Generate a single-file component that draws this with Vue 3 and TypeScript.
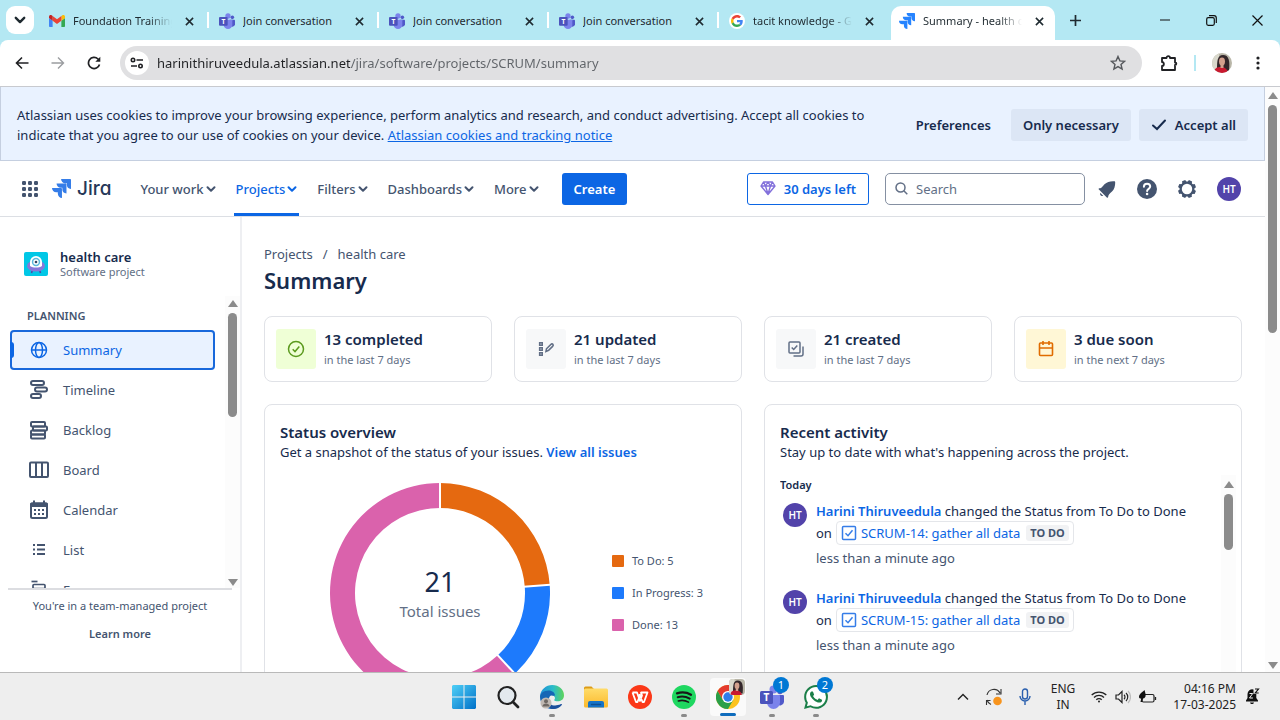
<script setup lang="ts">
import { ref } from 'vue'

interface Tab { title: string; icon: string; active?: boolean }
interface Stat { icon: string; tone: string; title: string; note: string }
interface Slice { label: string; value: number; color: string }

const tabs: Tab[] = [
  { title: 'Foundation Training', icon: 'gmail' },
  { title: 'Join conversation', icon: 'teams' },
  { title: 'Join conversation', icon: 'teams' },
  { title: 'Join conversation', icon: 'teams' },
  { title: 'tacit knowledge - Google', icon: 'google' },
  { title: 'Summary - health care', icon: 'jira', active: true },
]

const menu = [
  { label: 'Your work' },
  { label: 'Projects', active: true },
  { label: 'Filters' },
  { label: 'Dashboards' },
  { label: 'More' },
]

const planning = ['Summary', 'Timeline', 'Backlog', 'Board', 'Calendar', 'List', 'Forms']

const stats: Stat[] = [
  { icon: 'done', tone: 'green', title: '13 completed', note: 'in the last 7 days' },
  { icon: 'edited', tone: 'grey', title: '21 updated', note: 'in the last 7 days' },
  { icon: 'created', tone: 'grey', title: '21 created', note: 'in the last 7 days' },
  { icon: 'due', tone: 'yellow', title: '3 due soon', note: 'in the next 7 days' },
]

const slices: Slice[] = [
  { label: 'To Do', value: 5, color: '#e56910' },
  { label: 'In Progress', value: 3, color: '#1d7afc' },
  { label: 'Done', value: 13, color: '#da62ac' },
]
const total = slices.reduce((sum, s) => sum + s.value, 0)

function point(share: number, radius: number): string {
  const angle = share * 2 * Math.PI
  return `${110 + radius * Math.sin(angle)} ${110 - radius * Math.cos(angle)}`
}

let passed = 0
const arcs = slices.map((s) => {
  const from = passed / total
  passed += s.value
  const to = passed / total
  const large = to - from > 0.5 ? 1 : 0
  return {
    color: s.color,
    d: `M${point(from, 110)} A110 110 0 ${large} 1 ${point(to, 110)} L${point(to, 85)} A85 85 0 ${large} 0 ${point(from, 85)} Z`,
    edge: `M${point(from, 84)} L${point(from, 111)}`,
  }
})

const activity = ['SCRUM-14: gather all data', 'SCRUM-15: gather all data', 'SCRUM-16: gather all data']

const apps = [
  { name: 'Start', icon: 'windows' },
  { name: 'Search', icon: 'find' },
  { name: 'Edge', icon: 'edge', running: true },
  { name: 'File Explorer', icon: 'folder' },
  { name: 'WPS Office', icon: 'wps' },
  { name: 'Spotify', icon: 'spotify', running: true },
  { name: 'Chrome', icon: 'chrome', active: true },
  { name: 'Teams', icon: 'teams', running: true, badge: 1 },
  { name: 'WhatsApp', icon: 'whatsapp', running: true, badge: 2 },
]

const address = ref('harinithiruveedula.atlassian.net/jira/software/projects/SCRUM/summary')
const query = ref('')
</script>

<template>
  <div class="screen">
    <svg class="sprite" aria-hidden="true">
      <defs>
        <linearGradient id="winGrad" x1="0" y1="0" x2="1" y2="1"><stop offset="0" stop-color="#4fd0f7" /><stop offset="1" stop-color="#0070c8" /></linearGradient>
        <linearGradient id="edgeGrad" x1="0" y1="0" x2="1" y2="0"><stop offset="0" stop-color="#1d8fd8" /><stop offset=".55" stop-color="#2bbcc8" /><stop offset="1" stop-color="#5fd45a" /></linearGradient>
        <linearGradient id="folderGrad" x1="0" y1="0" x2="0" y2="1"><stop offset="0" stop-color="#ffdc6a" /><stop offset="1" stop-color="#fbb92c" /></linearGradient>
        <symbol id="i-gmail" viewBox="52 42 88 66">
          <path fill="#4285f4" d="M58 108h14V74L52 59v43c0 3.32 2.69 6 6 6" />
          <path fill="#34a853" d="M120 108h14c3.32 0 6-2.69 6-6V59l-20 15" />
          <path fill="#fbbc04" d="M120 48v26l20-15v-8c0-7.42-8.47-11.65-14.4-7.2" />
          <path fill="#ea4335" d="M72 74V48l24 18 24-18v26L96 92" />
          <path fill="#c5221f" d="M52 51v8l20 15V48l-5.600-4.200c-5.940-4.450-14.400-.22-14.400 7.200" />
        </symbol>
        <symbol id="i-teams" viewBox="0 0 24 24">
          <circle cx="20" cy="6.500" r="2.700" fill="#5059c9" /><path fill="#5059c9" d="M16 10h7a1 1 0 0 1 1 1v6a4 4 0 0 1-7 2z" />
          <circle cx="13.500" cy="4.500" r="4" fill="#7b83eb" /><path fill="#7b83eb" d="M8 10h11a1 1 0 0 1 1 1v6.500a6.500 6.500 0 0 1-13 0z" />
          <rect x="0" y="6" width="13" height="13" rx="1.500" fill="#4b53bc" />
          <text x="6.500" y="16" text-anchor="middle" font-size="10" font-weight="700" fill="#fff">T</text>
        </symbol>
        <symbol id="i-google" viewBox="-8 -8 64 64">
          <circle cx="24" cy="24" r="32" fill="#fff" />
          <path fill="#EA4335" d="M24 9.500c3.540 0 6.710 1.220 9.210 3.600l6.850-6.850C35.900 2.380 30.470 0 24 0 14.620 0 6.510 5.380 2.560 13.220l7.980 6.190C12.430 13.720 17.740 9.500 24 9.500z" />
          <path fill="#4285F4" d="M46.980 24.550c0-1.570-.15-3.090-.38-4.550H24v9.020h12.940c-.58 2.960-2.260 5.480-4.780 7.180l7.730 6c4.510-4.180 7.090-10.360 7.090-17.650z" />
          <path fill="#FBBC05" d="M10.530 28.590A14.500 14.500 0 0 1 9.770 24c0-1.600.27-3.140.76-4.590l-7.980-6.190A23.900 23.900 0 0 0 0 24c0 3.880.92 7.540 2.560 10.780l7.970-6.190z" />
          <path fill="#34A853" d="M24 48c6.480 0 11.930-2.130 15.890-5.810l-7.730-6c-2.150 1.450-4.920 2.300-8.160 2.300-6.260 0-11.570-4.220-13.470-9.910l-7.980 6.190C6.510 42.620 14.620 48 24 48z" />
        </symbol>
        <symbol id="i-jira" viewBox="0 0 24 24">
          <path d="M11.571 11.513H0a5.218 5.218 0 0 0 5.232 5.215h2.130v2.057A5.215 5.215 0 0 0 12.575 24V12.518a1.005 1.005 0 0 0-1.005-1.005zm5.723-5.756H5.736a5.215 5.215 0 0 0 5.215 5.214h2.129v2.058a5.218 5.218 0 0 0 5.215 5.214V6.758a1.001 1.001 0 0 0-1.001-1.001zM23.013 0H11.455a5.215 5.215 0 0 0 5.215 5.215h2.129v2.057A5.215 5.215 0 0 0 24 12.483V1.005A1.001 1.001 0 0 0 23.013 0Z" />
        </symbol>
        <symbol id="i-person" viewBox="0 0 20 20">
          <rect width="20" height="20" fill="#b9b6a8" /><path fill="#d9d8cc" d="M0 0h7v20H0z" />
          <path fill="#33262a" d="M5 17C5 9 5 2 11 2s7 6 6 16z" /><path fill="#c9192f" d="M2 20c0-5 3-6 7-6s7 3 7 6z" />
          <ellipse cx="10" cy="8.500" rx="3" ry="4" fill="#d3a08d" /><path fill="#d3a08d" d="M8.500 11h3v4h-3z" />
        </symbol>
        <symbol id="i-close" viewBox="0 0 10 10"><path d="M1 1l8 8M9 1L1 9" fill="none" stroke="currentColor" stroke-width="1.700" /></symbol>
        <symbol id="i-chevron" viewBox="0 0 10 10"><path d="M1.500 3.200L5 6.700l3.500-3.500" fill="none" stroke="currentColor" stroke-width="2" stroke-linecap="round" stroke-linejoin="round" /></symbol>

        <symbol id="i-Summary" viewBox="0 0 20 20"><g fill="none" stroke="currentColor" stroke-width="1.500"><circle cx="10" cy="10" r="7.500" /><ellipse cx="10" cy="10" rx="3.500" ry="7.500" /><path d="M2.500 10h15" /></g></symbol>
        <symbol id="i-Timeline" viewBox="0 0 20 20"><g fill="none" stroke="currentColor" stroke-width="2"><rect x="2" y="1" width="13" height="4" rx="2" /><rect x="6" y="7.500" width="12" height="4" rx="2" /><rect x="2" y="14" width="10" height="4" rx="2" /></g></symbol>
        <symbol id="i-Backlog" viewBox="0 0 20 20"><g fill="none" stroke="currentColor" stroke-width="2"><rect x="2" y="2" width="14" height="4.500" rx="1" /><rect x="4" y="6.500" width="14" height="4" rx="1" /><rect x="2" y="10.500" width="14" height="4" rx="1" /><rect x="2" y="14.500" width="14" height="4" rx="1" /></g></symbol>
        <symbol id="i-Board" viewBox="0 0 20 20"><g fill="none" stroke="currentColor" stroke-width="2"><rect x="1" y="2.500" width="18" height="14.500" rx="1" /><path d="M7 2.500v14.500M13 2.500v14.500" /></g></symbol>
        <symbol id="i-Calendar" viewBox="0 0 20 20"><rect x="2" y="3.500" width="16" height="14.500" rx="1.500" fill="none" stroke="currentColor" stroke-width="2" /><path fill="currentColor" d="M1 7V4a1.500 1.500 0 0 1 1.500-1.500H4V.5h2v2h8v-2h2v2h1.500A1.500 1.500 0 0 1 19 4v3zM5 9h2v2H5zM9 9h2v2H9zM13 9h2v2h-2zM5 13h2v2H5zM9 13h2v2H9zM13 13h2v2h-2z" /></symbol>
        <symbol id="i-List" viewBox="0 0 20 20"><path fill="none" stroke="currentColor" stroke-width="1.800" d="M4 5h2M4 9.500h2M4 14h2M8 5h8M8 9.500h8M8 14h8" /></symbol>
        <symbol id="i-Forms" viewBox="0 0 20 20"><g fill="none" stroke="currentColor" stroke-width="1.700"><path d="M2.500 1.500h6" /><rect x="4" y="4.500" width="12" height="4" rx="1" /><rect x="2.500" y="12" width="12" height="4" rx="1" /></g></symbol>

        <symbol id="i-done" viewBox="0 0 18 18"><g fill="none" stroke="currentColor" stroke-width="1.500"><circle cx="9" cy="9" r="7.500" /><path d="M5.700 9.300l2.300 2.300 4.300-5" /></g></symbol>
        <symbol id="i-edited" viewBox="0 0 18 18"><g fill="none" stroke="currentColor" stroke-width="1.600"><path d="M2.700 2.700h2.500v2.500H2.700zM2.700 7.700h2.500v2.500H2.700zM2.700 12.700h2.500v2.500H2.700z" /><path d="M9 11.500l.5-2.700 4.300-4.300c1.600-1.600 3.300.4 1.800 1.900l-4 4z" /></g></symbol>
        <symbol id="i-created" viewBox="0 0 18 18"><g fill="none" stroke="currentColor" stroke-width="1.500"><rect x="2" y="2" width="11" height="11" rx="1" /><path d="M4.700 7.500l2 2 3.600-4M16 6.500V14a2 2 0 0 1-2 2H6.500" /></g></symbol>
        <symbol id="i-due" viewBox="0 0 18 18"><g fill="none" stroke="currentColor" stroke-width="1.600"><rect x="2.500" y="3" width="13" height="12.500" rx="1" /><path d="M2.500 8h13M6 1v4M12 1v4" /></g></symbol>

        <symbol id="i-windows" viewBox="0 0 24 24"><path fill="url(#winGrad)" d="M1 0h10.500v11.500H0V1zM12.500 0H23l1 1v10.500H12.500zM0 12.500h11.500V24H1l-1-1zM12.500 12.500H24V23l-1 1H12.500z" /></symbol>
        <symbol id="i-find" viewBox="0 0 24 24"><circle cx="11" cy="10.500" r="8.500" fill="#e3e9ee" stroke="#222" stroke-width="2.200" /><path d="M17 17l5 5" stroke="#222" stroke-width="2.800" stroke-linecap="round" /></symbol>
        <symbol id="i-edge" viewBox="0 0 24 24">
          <path fill="url(#edgeGrad)" d="M0 11.500C.5 4.500 6 0 12.300 0 19 0 24 4.500 24 10.200c0 4-3 6.300-6.500 6.300-3.300 0-3.800-1.300-3.200-2 .9-1 .7-4-2.800-4C6 10.500 1 14 0 11.500z" />
          <path fill="#1566b5" d="M0 12c.2-3.700 4-6.500 8.500-6.500 4 0 6.500 2.500 6.500 5-5 .5-6.800 3-6.300 6.500.6 4 5.300 5.500 10.500 4-1.700 2-4.500 3-7.200 3C5 24 0 18.500 0 12z" />
          <path fill="#1a4f9c" d="M8.700 14c-.7 5.500 5 8.300 12.300 5 .7-.3 1.300.2.800.9A12 12 0 0 1 12 24c-4-1-6-6-3.300-10z" />
          <path fill="#eee" d="M11.500 10.500c3.500 0 3.700 3 2.800 4-.6.700-.1 2 3.200 2 2 0 3.500-.7 4.700-1.800-1 3.500-4 4.800-6.500 4.600-4.500-.3-7-3.300-6.700-5.800.2-1.600 1-2.800 2.500-3z" />
          <circle cx="6" cy="18" r="5.500" fill="#bfb8b2" /><circle cx="6" cy="16.300" r="2" fill="#6e6863" /><path fill="#6e6863" d="M2.300 21.500c.5-4 6.900-4 7.400 0z" />
        </symbol>
        <symbol id="i-folder" viewBox="0 0 24 24"><path fill="#dc9b16" d="M0 3a1.500 1.500 0 0 1 1.500-1.500h6L10 4v4H0z" /><rect y="3.500" width="24" height="19" rx="1.500" fill="url(#folderGrad)" /><path fill="#1473c8" d="M4 22.500V18a2 2 0 0 1 2-2h12a2 2 0 0 1 2 2v4.500z" /><path d="M7.500 19.500h9" stroke="#0b4f91" stroke-width="1.500" stroke-linecap="round" /></symbol>
        <symbol id="i-wps" viewBox="0 0 24 24"><circle cx="12" cy="12" r="12" fill="#fb3818" /><path fill="none" stroke="#fff" stroke-width="1.800" stroke-linejoin="round" d="M4.500 7.500H9l3 8.500 2-5.500L13 7.500h6.500L16 17h-1.500L11.500 9M4.500 7.500L8 17h1.500L12 10" /></symbol>
        <symbol id="i-spotify" viewBox="0 0 24 24"><circle cx="12" cy="12" r="12" fill="#1ed760" /><g fill="none" stroke="#181818" stroke-linecap="round"><path stroke-width="2.300" d="M5 8.300c4.800-1.400 9.800-1 14 1.400" /><path stroke-width="2" d="M5.700 12.200c4.200-1.200 8.300-.7 12 1.400" /><path stroke-width="1.600" d="M6.300 15.900c3.500-1 7-.6 10.200 1.200" /></g></symbol>
        <symbol id="i-chrome" viewBox="0 0 24 24"><circle cx="12" cy="12" r="12" fill="#fcc31e" /><path fill="#e33b2e" d="M1.600 6A12 12 0 0 1 22.400 6H12L6.800 15z" /><path fill="#2a9f49" d="M1.600 6A12 12 0 0 0 12 24l5.200-9L12 12 6.800 15z" /><circle cx="12" cy="12" r="6" fill="#fff" /><circle cx="12" cy="12" r="4.700" fill="#2f7de9" /></symbol>
        <symbol id="i-whatsapp" viewBox="0 0 24 24"><path fill="#fff" d="M12 1.200a10.800 10.800 0 1 1-5 20.300L1.500 22.500 2.800 17A10.800 10.800 0 0 1 12 1.200z" /><path fill="#1b7f49" d="M17.472 14.382c-.297-.149-1.758-.867-2.030-.967-.273-.099-.471-.148-.67.15-.197.297-.767.966-.94 1.164-.173.199-.347.223-.644.075-.297-.15-1.255-.463-2.390-1.475-.883-.788-1.480-1.761-1.653-2.059-.173-.297-.018-.458.13-.606.134-.133.298-.347.446-.52.149-.174.198-.298.298-.497.099-.198.05-.371-.025-.52-.075-.149-.669-1.612-.916-2.207-.242-.579-.487-.5-.669-.51-.173-.008-.371-.01-.57-.01-.198 0-.52.074-.792.372-.272.297-1.040 1.016-1.040 2.479 0 1.462 1.065 2.875 1.213 3.074.149.198 2.096 3.200 5.077 4.487.709.306 1.262.489 1.694.625.712.227 1.360.195 1.871.118.571-.085 1.758-.719 2.006-1.413.248-.694.248-1.289.173-1.413-.074-.124-.272-.198-.57-.347m-5.421 7.403h-.004a9.870 9.870 0 01-5.031-1.378l-.361-.214-3.741.982.998-3.648-.235-.374a9.860 9.860 0 01-1.510-5.260c.001-5.450 4.436-9.884 9.888-9.884 2.640 0 5.122 1.030 6.988 2.898a9.825 9.825 0 012.893 6.994c-.003 5.450-4.437 9.884-9.885 9.884m8.413-18.297A11.815 11.815 0 0012.050 0C5.495 0 .16 5.335.157 11.892c0 2.096.547 4.142 1.588 5.945L.057 24l6.305-1.654a11.882 11.882 0 005.683 1.448h.005c6.554 0 11.890-5.335 11.893-11.893a11.821 11.821 0 00-3.480-8.413Z" /></symbol>
      </defs>
    </svg>

    <header class="browser">
      <div class="tabstrip">
        <button class="tab-search" aria-label="Search tabs"><svg width="12" height="12"><use href="#i-chevron" /></svg></button>
        <div v-for="(tab, i) in tabs" :key="i" class="tab" :class="{ active: tab.active }">
          <svg class="tab-icon" width="16" height="16"><use :href="'#i-' + tab.icon" /></svg>
          <span class="tab-title">{{ tab.title }}</span>
          <button class="tab-close" aria-label="Close tab"><svg width="9" height="9"><use href="#i-close" /></svg></button>
        </div>
        <button class="new-tab" aria-label="New tab"><svg width="11" height="11" viewBox="0 0 11 11"><path d="M5.500 0v11M0 5.500h11" stroke="currentColor" stroke-width="1.700" /></svg></button>
        <div class="window-buttons">
          <button aria-label="Minimize"><svg width="10" height="10" viewBox="0 0 10 10"><path d="M0 5h10" stroke="currentColor" /></svg></button>
          <button aria-label="Restore"><svg width="11" height="11" viewBox="0 0 11 11" fill="none" stroke="currentColor" stroke-width="1.200"><rect x=".7" y="2.700" width="7.600" height="7.600" rx="1.500" /><path d="M3 .7h5a2.300 2.300 0 0 1 2.300 2.300v5" /></svg></button>
          <button aria-label="Close"><svg width="11" height="11" viewBox="0 0 11 11"><path d="M.5.5l10 10M10.500.5l-10 10" stroke="currentColor" stroke-width="1.200" /></svg></button>
        </div>
      </div>
      <div class="toolbar">
        <button class="tool" aria-label="Back"><svg width="14" height="14" viewBox="0 0 14 14"><path d="M13.500 7H1.500M7 1.500L1.500 7 7 12.500" fill="none" stroke="#202124" stroke-width="1.600" /></svg></button>
        <button class="tool" aria-label="Forward"><svg width="14" height="14" viewBox="0 0 14 14"><path d="M.5 7h12M7 1.500L12.500 7 7 12.500" fill="none" stroke="#9b9da0" stroke-width="1.400" /></svg></button>
        <button class="tool" aria-label="Reload"><svg width="14" height="14" viewBox="0 0 14 14"><path d="M12.500 8.500A5.600 5.600 0 1 1 11 3l1.500 1.500" fill="none" stroke="#202124" stroke-width="1.700" /><path d="M13.300.7v5h-5z" fill="#202124" /></svg></button>
        <div class="omnibox">
          <button class="site-info" aria-label="Site information"><svg width="14" height="12" viewBox="0 0 14 12" fill="none" stroke="#202124" stroke-width="1.600"><circle cx="3" cy="3" r="1.700" /><path d="M6.500 3H13M1 9h6" /><circle cx="10.500" cy="9" r="1.700" /></svg></button>
          <input v-model="address" class="address" aria-label="Address" />
          <button class="tool" aria-label="Bookmark"><svg width="16" height="16" viewBox="0 0 16 16"><path d="M8 1.500l1.900 4.400 4.700.4-3.600 3.100 1.100 4.700L8 11.600l-4.100 2.500L5 9.400 1.400 6.300l4.700-.4z" fill="none" stroke="#55585c" stroke-width="1.400" /></svg></button>
        </div>
        <button class="tool ext" aria-label="Extensions"><svg width="18" height="18" viewBox="0 0 18 18"><path d="M2 4h4.500c0-2.500 3.500-2.500 3.500 0h5v4.500c1.800 0 1.800 2.500 0 2.500v5H2v-4c2.500 0 2.500-4 0-4z" fill="none" stroke="#202124" stroke-width="1.800" stroke-linejoin="round" /></svg></button>
        <span class="tool-line"></span>
        <button class="tool" aria-label="Profile"><svg class="round" width="20" height="20"><use href="#i-person" /></svg></button>
        <button class="tool" aria-label="Menu"><svg width="4" height="16" viewBox="0 0 4 16" fill="#202124"><circle cx="2" cy="3" r="1.600" /><circle cx="2" cy="8" r="1.600" /><circle cx="2" cy="13" r="1.600" /></svg></button>
      </div>
    </header>

    <div class="viewport">
      <div class="page">
        <section class="cookies">
          <p>Atlassian uses cookies to improve your browsing experience, perform analytics and research, and conduct advertising. Accept all cookies to indicate that you agree to our use of cookies on your device. <a href="#cookies">Atlassian cookies and tracking notice</a></p>
          <div class="cookie-buttons">
            <button class="plain">Preferences</button>
            <button>Only necessary</button>
            <button><svg width="16" height="12" viewBox="0 0 16 12"><path d="M2 6.500L6 10l8-8.500" fill="none" stroke="currentColor" stroke-width="2" stroke-linecap="round" /></svg>Accept all</button>
          </div>
        </section>

        <nav class="topnav">
          <button class="icon-button apps" aria-label="Switch apps"><svg width="16" height="16" viewBox="0 0 16 16" fill="#44546f"><rect v-for="n in 9" :key="n" :x="((n - 1) % 3) * 6" :y="Math.floor((n - 1) / 3) * 6" width="4" height="4" rx="1.200" /></svg></button>
          <a class="logo" href="#home"><svg width="19" height="19" fill="#357de8"><use href="#i-jira" /></svg>Jira</a>
          <div class="menu">
            <button v-for="item in menu" :key="item.label" :class="{ active: item.active }">{{ item.label }}<svg width="10" height="10"><use href="#i-chevron" /></svg></button>
          </div>
          <button class="create">Create</button>
          <button class="trial"><svg width="16" height="15" viewBox="0 0 16 15"><path d="M3.500 1h9L15 5l-7 8.500L1 5zM1 5h14M5.500 5L8 13l2.500-8L8 1 5.500 5 3.500 1M10.500 5l2-4" fill="none" stroke="#8270db" stroke-width="1.400" stroke-linejoin="round" /></svg>30 days left</button>
          <label class="search"><svg width="13" height="13" viewBox="0 0 13 13" fill="none" stroke="#626f86" stroke-width="1.500"><circle cx="5.500" cy="5.500" r="4.500" /><path d="M8.800 8.800l3.500 3.500" /></svg><input v-model="query" placeholder="Search" aria-label="Search" /></label>
          <button class="icon-button" aria-label="Notifications"><svg width="18" height="18" viewBox="0 0 18 18" fill="#44546f"><path d="M1.300 8.200C4 8.200 4.500 6 6.500 4.200 9 2 12 1 16 1.200c1 0 1.200.3 1.200 1.200 0 3.600-.8 6.800-3.200 9.200-2 2-3.600 2.600-3.900 5.400-.1.800-.8.900-1.300.4L.9 9.500c-.5-.5-.4-1.300.4-1.300z" /><path d="M2.300 13l2.900 2.800c-1.500 1.200-4-1.200-2.900-2.800z" /></svg></button>
          <button class="icon-button" aria-label="Help"><svg width="20" height="20" viewBox="0 0 20 20"><circle cx="10" cy="10" r="10" fill="#44546f" /><path d="M6.900 7.800c0-4.100 6.300-3.900 6.300-.2 0 2.300-3.100 2.300-3.100 4.500" fill="none" stroke="#fff" stroke-width="2" stroke-linecap="round" /><circle cx="10.100" cy="15" r="1.300" fill="#fff" /></svg></button>
          <button class="icon-button" aria-label="Settings"><svg width="20" height="20" viewBox="0 0 20 20"><circle cx="10" cy="10" r="6.300" fill="none" stroke="#44546f" stroke-width="2.200" /><path v-for="n in 8" :key="n" :transform="`rotate(${n * 45 - 22} 10 10)`" d="M7.500 4l.8-3h3.400l.8 3z" fill="#44546f" /></svg></button>
          <button class="avatar me" aria-label="Your profile">HT</button>
        </nav>

        <div class="columns">
          <aside class="sidebar">
            <div class="project">
              <svg width="24" height="24" viewBox="0 0 24 24"><rect width="24" height="24" rx="2" fill="#00c7e6" /><path d="M8.500 18l-1 3M15.500 18l1 3" stroke="#5243aa" stroke-width="1.500" /><ellipse cx="12" cy="14" rx="9" ry="5.500" fill="#8777d9" /><path fill="#fff" d="M6 14V10a6 6 0 0 1 12 0v4c-3 2-9 2-12 0z" /><circle cx="12" cy="10" r="4.200" fill="#5bb8dc" /><circle cx="12" cy="10" r="2.700" fill="#fff" /><circle cx="12" cy="10" r="1.300" fill="#344563" /></svg>
              <div><strong>health care</strong><span>Software project</span></div>
            </div>
            <div class="side-scroll">
              <div class="side-list">
                <h2>PLANNING</h2>
                <a v-for="(label, i) in planning" :key="label" href="#view" :class="{ selected: i === 0 }"><svg width="20" height="20"><use :href="'#i-' + label" /></svg>{{ label }}</a>
              </div>
              <div class="bar side" aria-hidden="true"><i class="up"></i><span></span><i class="down"></i></div>
            </div>
            <footer class="side-foot"><p>You're in a team-managed project</p><button>Learn more</button></footer>
          </aside>

          <main>
            <div class="crumbs"><a href="#projects">Projects</a><span>/</span><a href="#health">health care</a></div>
            <h1>Summary</h1>
            <div class="stats">
              <article v-for="s in stats" :key="s.title" class="stat">
                <span class="tile" :class="s.tone"><svg width="18" height="18"><use :href="'#i-' + s.icon" /></svg></span>
                <div><strong>{{ s.title }}</strong><span>{{ s.note }}</span></div>
              </article>
            </div>
            <div class="panels">
              <section class="panel">
                <h3>Status overview</h3>
                <p>Get a snapshot of the status of your issues. <a href="#issues">View all issues</a></p>
                <div class="chart">
                  <svg width="220" height="220" viewBox="0 0 220 220">
                    <path v-for="a in arcs" :key="a.color" :d="a.d" :fill="a.color" />
                    <path v-for="a in arcs" :key="a.edge" :d="a.edge" stroke="#fff" stroke-width="2" />
                    <text x="110" y="109" class="big">{{ total }}</text>
                    <text x="110" y="134" class="sub">Total issues</text>
                  </svg>
                  <ul>
                    <li v-for="s in slices" :key="s.label"><i :style="{ background: s.color }"></i>{{ s.label }}: {{ s.value }}</li>
                  </ul>
                </div>
              </section>
              <section class="panel recent">
                <h3>Recent activity</h3>
                <p>Stay up to date with what's happening across the project.</p>
                <div class="feed">
                  <div class="feed-list">
                    <h4>Today</h4>
                    <div v-for="issue in activity" :key="issue" class="event">
                      <span class="avatar">HT</span>
                      <div>
                        <div class="what"><a href="#user">Harini Thiruveedula</a> changed the Status from To Do to Done</div>
                        <div class="on">on <a href="#issue" class="chip"><svg width="16" height="16" viewBox="0 0 16 16" fill="none" stroke="#357de8" stroke-width="1.500"><rect x="1.500" y="1.500" width="13" height="13" rx="1" /><path d="M4.500 8.300L7 10.700l4.500-5.500" /></svg>{{ issue }}<b>TO DO</b></a></div>
                        <div class="when">less than a minute ago</div>
                      </div>
                    </div>
                  </div>
                  <div class="bar feed-bar" aria-hidden="true"><i class="up"></i><span></span></div>
                </div>
              </section>
            </div>
          </main>
        </div>
      </div>
      <div class="bar main-bar" aria-hidden="true"><i class="up"></i><span></span><i class="down"></i></div>
    </div>

    <footer class="taskbar">
      <div></div>
      <div class="dock">
        <button v-for="app in apps" :key="app.name" :aria-label="app.name" :class="{ active: app.active, running: app.running }">
          <svg width="24" height="24"><use :href="'#i-' + app.icon" /></svg>
          <svg v-if="app.active" class="mini" width="16" height="16"><use href="#i-person" /></svg>
          <span v-if="app.badge" class="badge">{{ app.badge }}</span>
        </button>
      </div>
      <div class="tray">
        <button aria-label="Hidden icons"><svg width="12" height="8" viewBox="0 0 12 8"><path d="M1 6.500l5-5 5 5" fill="none" stroke="#222" stroke-width="1.400" /></svg></button>
        <button aria-label="Updates"><svg width="18" height="18" viewBox="0 0 18 18"><path d="M2 7A7 7 0 0 1 15 5M16 1v5h-5M6 16.500A7 7 0 0 1 2 12M1.500 17v-4.500h4" fill="none" stroke="#333" stroke-width="1.100" /><circle cx="12.500" cy="13" r="4.300" fill="#f7941d" /></svg></button>
        <button aria-label="Microphone"><svg width="12" height="18" viewBox="0 0 12 18" fill="none" stroke="#2a5fae" stroke-width="1.400"><rect x="3.500" y="1" width="5" height="10" rx="2.500" /><path d="M1 8a5 5 0 0 0 10 0M6 13.500V17" /></svg></button>
        <button class="lang">ENG<br />IN</button>
        <button class="system" aria-label="Network, volume and battery">
          <svg width="16" height="13" viewBox="0 0 16 13" fill="none" stroke="#222" stroke-width="1.300"><path d="M.7 5a10.500 10.500 0 0 1 14.600 0M3 7.500a7 7 0 0 1 10 0M5.300 9.800a3.800 3.800 0 0 1 5.400 0" /><circle cx="8" cy="11.500" r="1" fill="#222" stroke="none" /></svg>
          <svg width="16" height="14" viewBox="0 0 16 14" fill="none" stroke="#222" stroke-width="1.200"><path d="M1 5h2.500L7 1.500v11L3.500 9H1zM9 4.800a3 3 0 0 1 0 4.400M11 3a5.500 5.500 0 0 1 0 8" /><path d="M13 1a8.500 8.500 0 0 1 0 12" stroke="#bbb" /></svg>
          <svg width="18" height="14" viewBox="0 0 18 14"><rect x="3" y="4.500" width="12" height="7.500" rx="1.500" fill="none" stroke="#222" stroke-width="1.200" /><path d="M16.500 7v3" stroke="#222" stroke-width="1.300" /><path d="M0 7c0-3 3-4.500 5.500-7 1.500 4.500 2 8-1.500 8.500L3 12H1.500l.7-3.500C1 8.500 0 8 0 7z" fill="#111" /></svg>
        </button>
        <button class="clock">04:16 PM<br />17-03-2025</button>
        <button aria-label="Notifications"><svg width="15" height="17" viewBox="0 0 15 17"><path d="M1 12.500l1.500-2.500V6a4.700 4.700 0 0 1 6-4.500V6h2.800v4l1.700 2.500v1H1zM5 14.500h4c-.5 2-3.500 2-4 0z" fill="#111" /><path d="M4.500 5.500h3.200L4.500 10h3.400" fill="none" stroke="#eee" /><path d="M10 1h3.500L10.300 5h3.400" fill="none" stroke="#111" stroke-width="1.200" /></svg></button>
      </div>
    </footer>
  </div>
</template>

<style>
body { margin: 0; }
</style>

<style scoped>
* { box-sizing: border-box; }
.screen { height: 100vh; display: flex; flex-direction: column; overflow: hidden; background: #fff; color: #172b4d; font: 13px/20px "Noto Sans", "Open Sans", sans-serif; }
.sprite { position: absolute; width: 0; height: 0; }
button, input { font: inherit; color: inherit; border: 0; background: none; padding: 0; margin: 0; outline: 0; }
button { display: inline-flex; align-items: center; justify-content: center; flex: none; white-space: nowrap; }
svg { flex: none; display: block; }
a { color: #0c66e4; text-decoration: none; }
h1, h2, h3, h4, p, ul { margin: 0; padding: 0; }

.browser { flex: none; background: #b4e8f3; }
.tabstrip { height: 40px; display: flex; align-items: center; padding-left: 6px; color: #1f2a30; font-size: 11px; }
.tab-search { width: 28px; height: 28px; border-radius: 9px; background: #fff; margin-right: 4px; }
.tab { position: relative; width: 170px; height: 40px; flex: 0 1 170px; display: flex; align-items: center; padding: 2px 14px 0 11px; }
.tab:not(.active)::after { content: ""; position: absolute; right: -1px; top: 12px; width: 2px; height: 16px; background: #fff; }
.tab:nth-child(6)::after { display: none; }
.tab.active::before { content: ""; position: absolute; inset: 6px 3px 0; border-radius: 10px 10px 0 0; background: #fff; }
.tab-icon { position: relative; margin-right: 8px; fill: #2684ff; }
.tab-title { position: relative; flex: 1; min-width: 0; overflow: hidden; white-space: nowrap; mask-image: linear-gradient(to right, #000 76px, transparent 99px); }
.tab:nth-child(3) .tab-title, .tab:nth-child(4) .tab-title, .tab:nth-child(5) .tab-title { mask-image: none; }
.tab-close { position: relative; width: 10px; margin-left: 10px; }
.new-tab { width: 34px; }
.window-buttons { margin-left: auto; display: flex; color: #111; }
.window-buttons button { width: 46px; height: 40px; }
.toolbar { height: 47px; display: flex; align-items: center; padding: 0 4px; background: #fff; border-radius: 8px 8px 0 0; border-bottom: 1px solid #c8cacf; }
.tool { width: 36px; height: 34px; }
.omnibox { flex: 1; height: 34px; margin: 0 9px 0 8px; border-radius: 17px; background: #e0e0e2; display: flex; align-items: center; padding: 0 6px 0 5px; }
.site-info { width: 24px; height: 24px; border-radius: 50%; background: #fff; margin-right: 8px; }
.address { flex: 1; min-width: 0; background: linear-gradient(to right, #202124 193px, #5f6368 193px); background-clip: text; -webkit-background-clip: text; -webkit-text-fill-color: transparent; }
.tool-line { width: 2px; height: 16px; margin: 0 8px 0 7px; background: #b4e8f3; }
.round { border-radius: 50%; }

.viewport { flex: 1; min-height: 0; display: flex; border-bottom: 1px solid #b9b9b9; }
.page { flex: 1; min-width: 0; display: flex; flex-direction: column; overflow: hidden; }
.bar { flex: none; width: 15px; display: flex; flex-direction: column; align-items: center; background: #fcfcfc; }
.bar i { border: 5px solid transparent; }
.bar .up { border-top: 0; border-bottom: 7px solid #8b8b8b; }
.bar .down { border-bottom: 0; border-top: 7px solid #8b8b8b; margin-top: auto; }
.bar span { width: 9px; border-radius: 5px; background: #8b8b8b; margin-top: 6px; }
.main-bar { padding: 5px 0 3px; }
.main-bar span { height: 228px; }

.cookies { flex: none; display: flex; align-items: center; justify-content: space-between; gap: 20px; padding: 18px 16px 15px; background: #e9f2ff; border: 1px solid #c5cfe0; border-top: 0; }
.cookies p { flex: 1; }
.cookies a { text-decoration: underline; }
.cookie-buttons { display: flex; gap: 8px; font-weight: 600; }
.cookie-buttons button { height: 32px; padding: 0 12px; gap: 8px; border-radius: 3px; background: #dce6f5; }
.cookie-buttons .plain { background: none; }

.topnav { flex: none; height: 56px; display: flex; align-items: center; padding: 0 24px 0 14px; border-bottom: 1px solid #dcdfe4; color: #44546f; font-weight: 500; }
.icon-button { width: 32px; height: 32px; margin-right: 8px; }
.icon-button.apps { margin-right: 6px; }
.logo { display: flex; align-items: center; gap: 6px; margin-right: 20px; color: #253858; font: 500 19px/24px Inter, "Open Sans", sans-serif; font-feature-settings: "cv11"; }
.menu { display: flex; align-self: stretch; gap: 2px; }
.menu button { position: relative; gap: 2px; padding: 0 9px; }
.menu .active { color: #0c66e4; }
.menu .active::after { content: ""; position: absolute; left: 7px; right: 7px; bottom: 0; height: 3px; background: #0c66e4; }
.create { height: 32px; padding: 0 12px; margin-left: 14px; border-radius: 3px; background: #0c66e4; color: #fff; font-weight: 600; }
.trial { height: 32px; padding: 0 12px; gap: 8px; margin: 0 16px 0 auto; border: 1px solid #0c66e4; border-radius: 3px; color: #0c66e4; font-weight: 600; }
.search { display: flex; align-items: center; gap: 8px; width: 200px; height: 32px; padding: 0 9px; margin-right: 6px; border: 1px solid #8590a2; border-radius: 5px; font-weight: 400; }
.search input { flex: 1; min-width: 0; }
.search input::placeholder { color: #626f86; opacity: 1; }
.avatar { flex: none; width: 24px; height: 24px; border-radius: 50%; display: flex; align-items: center; justify-content: center; background: #5243aa; color: #fff; font-size: 10px; font-weight: 600; }
.me { margin-left: 6px; }

.columns { flex: 1; min-height: 0; display: flex; }
.sidebar { flex: none; width: 242px; display: flex; flex-direction: column; border-right: 2px solid #eeeff2; color: #44546f; }
.project { display: flex; align-items: center; gap: 12px; padding: 32px 24px 17px; }
.project strong { display: block; color: #172b4d; font-weight: 600; line-height: 16px; }
.project span { display: block; font-size: 11px; line-height: 14px; color: #626f86; }
.side-scroll { flex: 1; min-height: 0; display: flex; }
.side-list { flex: 1; padding: 10px 10px 0; overflow: hidden; }
.side-list h2 { margin: 0 17px 4px; font-size: 11px; font-weight: 600; line-height: 20px; }
.side-list a { position: relative; display: flex; align-items: center; gap: 14px; height: 40px; padding-left: 19px; color: #44546f; overflow: hidden; }
.side-list .selected { background: #e9f2ff; color: #0c66e4; box-shadow: inset 0 0 0 2px #1868db; border-radius: 4px; }
.side-list .selected::before { content: ""; position: absolute; left: 0; top: 12px; width: 4px; height: 16px; border-radius: 0 3px 3px 0; background: #0c66e4; }
.side { padding: 4px 0 2px; }
.side span { height: 104px; }
.side-foot { margin: 0 8px; padding: 6px 0 28px; border-top: 2px solid #dcdde1; font-size: 11px; text-align: center; }
.side-foot button { font-weight: 600; margin-top: 8px; }

main { flex: 1; min-width: 0; padding: 27px 23px 0 22px; overflow: hidden; }
.crumbs { display: flex; gap: 10px; }
.crumbs, .crumbs a { color: #44546f; }
h1 { font-size: 22px; font-weight: 600; line-height: 32px; }
.stats { display: grid; grid-template-columns: repeat(4, 1fr); gap: 22px; margin-top: 20px; }
.stat { display: flex; align-items: center; gap: 8px; height: 66px; padding: 0 11px; border: 1px solid #e0e2e7; border-radius: 8px; }
.tile { width: 40px; height: 40px; display: grid; place-items: center; border-radius: 3px; }
.green { background: #efffd6; color: #5b9a1e; }
.grey { background: #f7f8f9; color: #626f86; }
.yellow { background: #fff7d6; color: #e06c00; }
.stat strong { display: block; font-size: 15px; font-weight: 600; line-height: 22px; }
.stat div span { display: block; font-size: 11px; color: #626f86; line-height: 20px; }
.panels { display: grid; grid-template-columns: 1fr 1fr; gap: 22px; margin-top: 22px; }
.panel { min-height: 420px; padding: 17px 15px; border: 1px solid #e0e2e7; border-radius: 8px; }
.panel h3 { font-size: 15px; font-weight: 600; line-height: 20px; }
.panel p a, .what a { font-weight: 600; }
.chart { display: flex; align-items: center; padding: 21px 0 0 50px; gap: 62px; }
.chart text { text-anchor: middle; }
.chart .big { font-size: 27px; fill: #172b4d; }
.chart .sub { font-size: 15px; fill: #626f86; }
.chart ul { list-style: none; font-size: 11px; color: #44546f; display: grid; gap: 12px; }
.chart li { display: flex; align-items: center; gap: 8px; }
.chart li i { width: 12px; height: 12px; border-radius: 1px; }
.recent { padding-right: 5px; }
.feed { display: flex; margin-top: 13px; height: 330px; overflow: hidden; }
.feed-list { flex: 1; min-width: 0; }
.feed-list h4 { font-size: 11px; font-weight: 600; line-height: 20px; }
.event { display: flex; gap: 9px; padding: 6px 0 0 3px; height: 87px; }
.event .avatar { margin-top: 2px; }
.on { display: flex; align-items: center; gap: 4px; height: 24px; }
.chip { display: flex; align-items: center; gap: 4px; height: 24px; padding: 0 4px; border: 1px solid #e4e6ea; border-radius: 4px; }
.chip b { margin-left: 2px; padding: 0 4px; border-radius: 3px; background: #f1f2f4; color: #44546f; font-size: 11px; line-height: 16px; }
.when { color: #44546f; line-height: 26px; }
.feed-bar { padding-top: 6px; }
.feed-bar span { height: 56px; }

.taskbar { flex: none; height: 47px; display: grid; grid-template-columns: 1fr auto 1fr; background: #eee; color: #222; font-size: 12px; line-height: 16px; }
.dock { display: flex; align-items: center; gap: 8px; }
.dock button { position: relative; width: 36px; height: 38px; border-radius: 4px; }
.dock .active { background: #fafafa; }
.dock .running::after, .dock .active::after { content: ""; position: absolute; bottom: -1px; left: 15px; width: 6px; height: 3px; border-radius: 2px; background: #8a8a8a; }
.dock .active::after { left: 10px; width: 16px; background: #0f6cbd; bottom: 0; }
.mini { position: absolute; top: 1px; right: 1px; border-radius: 4px; }
.badge { position: absolute; top: -1px; right: 1px; width: 16px; height: 16px; border-radius: 50%; background: #0078d4; color: #fff; font-size: 11px; line-height: 16px; }
.tray { display: flex; align-items: center; justify-content: flex-end; padding-right: 20px; }
.tray button { margin-left: 16px; }
.tray .lang { margin-left: 20px; text-align: center; }
.system { gap: 8px; }
.tray .clock { text-align: right; margin-left: 16px; }
.tray .clock + button { margin-left: 9px; }
</style>
